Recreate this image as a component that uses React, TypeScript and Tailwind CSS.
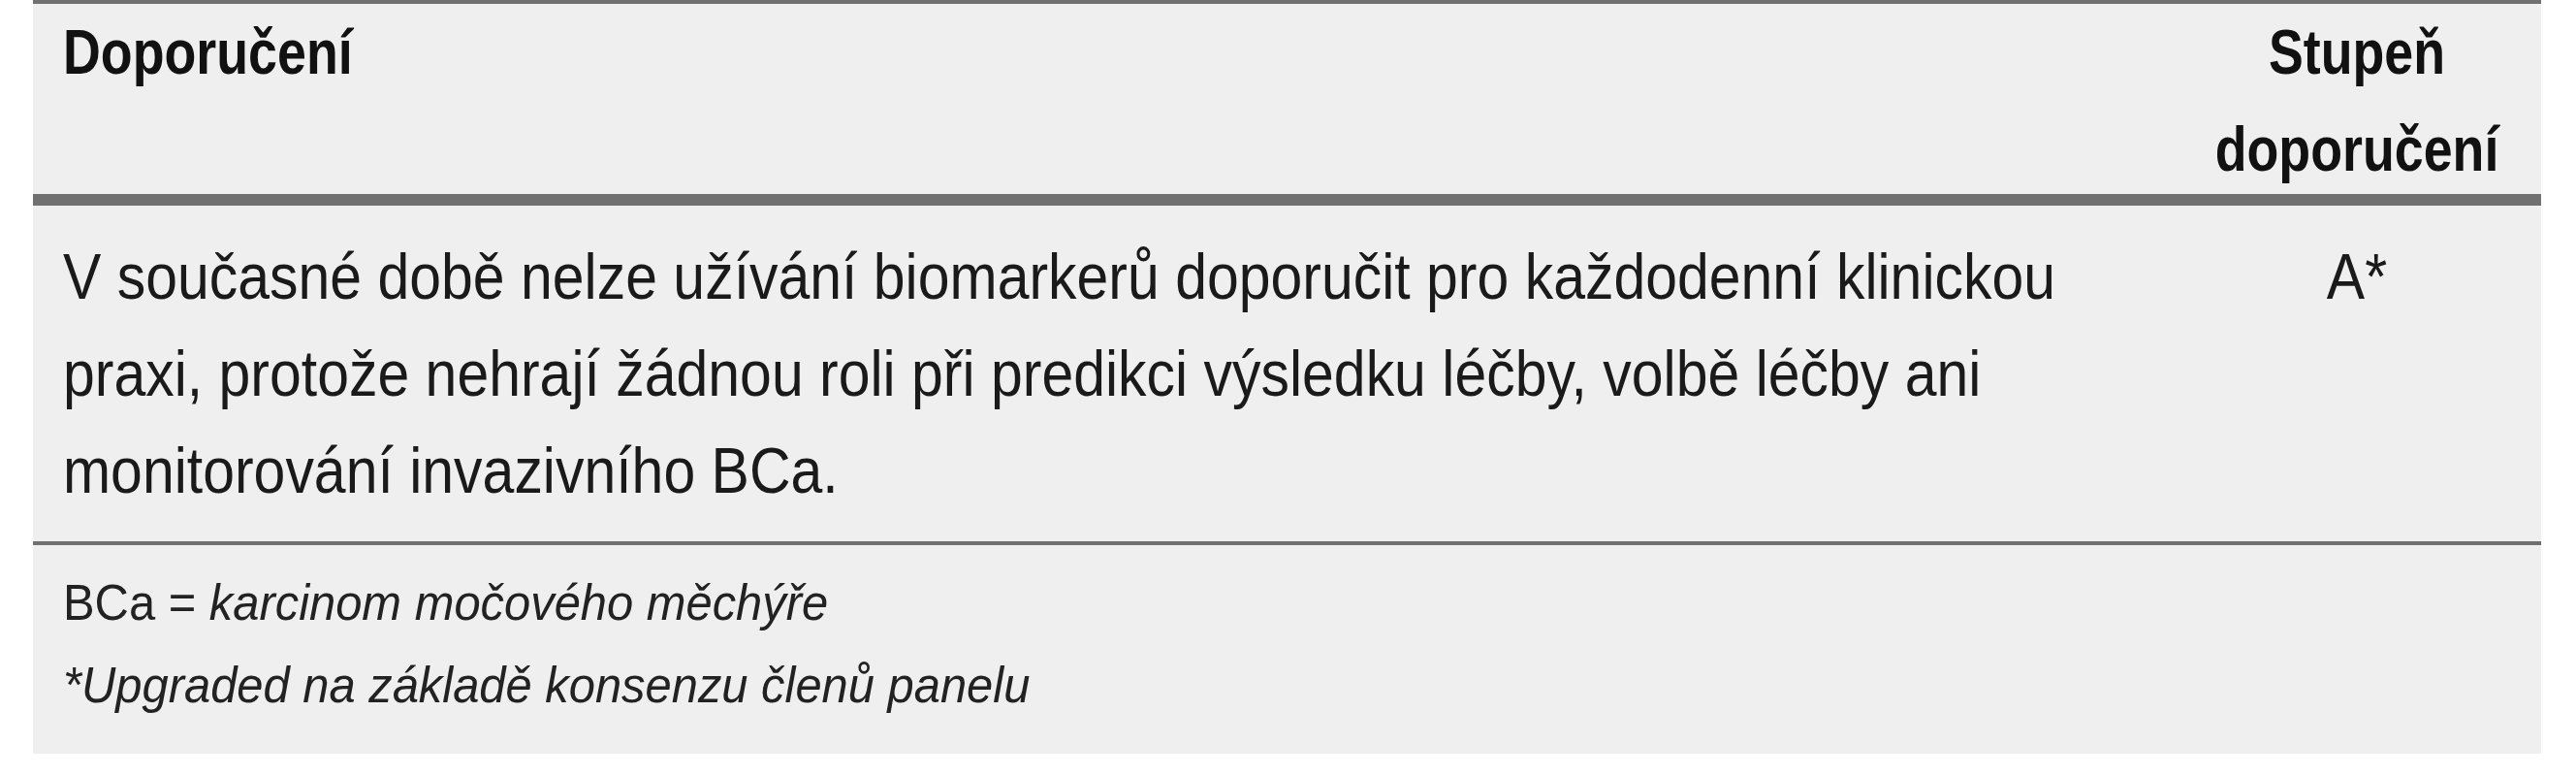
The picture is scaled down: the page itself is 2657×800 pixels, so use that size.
const FONT = "font-['Liberation_Sans',Arial,sans-serif]";

export default function App() {
  return (
    <div className={`min-h-[800px] bg-white pl-[34px] ${FONT}`}>
      <div className="w-[2587px] bg-[#efefef] text-[#1a1a1a]">
        {/* header row */}
        <div className="grid h-[212px] grid-cols-[minmax(0,1fr)_380px] border-t-4 border-b-[12px] border-[#707070] text-[64px] font-bold leading-[100px] text-[#111]">
          <div className="pl-[31px]">
            <div className="origin-left scale-x-[0.84] whitespace-nowrap">Doporučení</div>
          </div>
          <div className="scale-x-[0.84] whitespace-nowrap text-center">
            Stupeň
            <br />
            doporučení
          </div>
        </div>

        {/* recommendation row */}
        <div className="grid h-[350px] grid-cols-[minmax(0,1fr)_380px] border-b-4 border-[#707070] pt-[23px] text-[67px] leading-[100px]">
          <div className="pl-[31px]">
            <p className="origin-left scale-x-[0.88] whitespace-nowrap">
              V současné době nelze užívání biomarkerů doporučit pro každodenní klinickou
              <br />
              praxi, protože nehrají žádnou roli při predikci výsledku léčby, volbě léčby ani
              <br />
              monitorování invazivního BCa.
            </p>
          </div>
          <p className="scale-x-[0.88] text-center">A*</p>
        </div>

        {/* footnotes */}
        <div className="h-[215px] pl-[31px] pt-[17px] text-[52px] leading-[85px] text-[#222]">
          <div className="origin-left scale-x-[0.94] whitespace-nowrap">
            <p>
              BCa = <span className="italic">karcinom močového měchýře</span>
            </p>
            <p className="italic">*Upgraded na základě konsenzu členů panelu</p>
          </div>
        </div>
      </div>
    </div>
  );
}
